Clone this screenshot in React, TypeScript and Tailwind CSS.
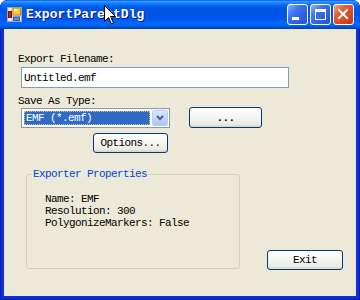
import type { ReactNode } from "react";

const mono = "font-['Liberation_Mono',monospace] text-[11px] leading-[12px] tracking-[-0.6px]";

const XpButton = ({ className, children }: { className: string; children: ReactNode }) => (
  <div
    className={`flex items-center justify-center rounded-[3px] border border-[#003c74] bg-[linear-gradient(180deg,#ffffff_0%,#f4f4f0_50%,#ecebe6_85%,#d6d0c5_100%)] text-black ${mono} ${className}`}
  >
    {children}
  </div>
);

const TitleIcon = () => (
  <svg width="15" height="15" viewBox="0 0 15 15">
    <rect x="0.5" y="0.5" width="14" height="14" fill="#f0f0f0" stroke="#9aa8c0" />
    <line x1="5" y1="0.5" x2="5" y2="14.5" stroke="#b8c4d8" />
    <line x1="0.5" y1="9" x2="14.5" y2="9" stroke="#b8c4d8" />
    <rect x="1.5" y="4.5" width="3" height="6" fill="#d81818" stroke="#8a0a0a" />
    <rect x="6" y="1" width="7.5" height="7" fill="#f8d040" stroke="#c08a10" />
    <rect x="7" y="2" width="3" height="2" fill="#fff4b0" />
    <rect x="6.5" y="10" width="6" height="3.5" fill="#5c8ce0" stroke="#2c5cb0" />
  </svg>
);

const Cursor = () => (
  <svg width="13" height="21" viewBox="0 0 13 21" className="absolute left-[103px] top-[4px]">
    <path
      d="M1.5 1.5 L1.5 17.5 L5.5 13.5 L8.5 20 L10.5 19 L7.5 12.5 L12.5 12.5 Z"
      fill="#ffffff"
      stroke="#000000"
      strokeWidth="1"
      strokeLinejoin="miter"
    />
  </svg>
);

const CaptionButton = ({ kind }: { kind: "min" | "max" | "close" }) => {
  const bg =
    kind === "close"
      ? "bg-[linear-gradient(135deg,#f2a58c_0%,#e35b32_35%,#d44a22_70%,#c03a18_100%)]"
      : "bg-[linear-gradient(135deg,#8fb2f8_0%,#3e74ee_35%,#2d5fe0_70%,#2452d0_100%)]";
  return (
    <div className={`h-[21px] w-[21px] rounded-[3px] border border-white ${bg}`}>
      <svg width="19" height="19" viewBox="0 0 19 19">
        {kind === "min" && <rect x="4" y="12" width="7" height="3" fill="#fff" />}
        {kind === "max" && (
          <g fill="#fff">
            <rect x="4" y="4" width="11" height="3" />
            <rect x="4" y="4" width="1" height="11" />
            <rect x="14" y="4" width="1" height="11" />
            <rect x="4" y="14" width="11" height="1" />
          </g>
        )}
        {kind === "close" && (
          <g stroke="#fff" strokeWidth="2" strokeLinecap="square">
            <line x1="5" y1="5" x2="13" y2="13" />
            <line x1="13" y1="5" x2="5" y2="13" />
          </g>
        )}
      </svg>
    </div>
  );
};

export default function App() {
  return (
    <div className="flex h-[300px] w-[360px] flex-col overflow-hidden rounded-t-[8px] bg-[#0831d9] shadow-[inset_1px_0_#001ea0,inset_-1px_0_#001ea0,inset_0_-1px_#001ea0]">
      {/* title bar */}
      <div className="relative flex h-[29px] shrink-0 items-center rounded-t-[8px] bg-[linear-gradient(180deg,#0058ee_0%,#3a93ff_5%,#288eff_8%,#127dff_12%,#036ffc_16%,#0262ee_22%,#0057e5_30%,#0054e3_40%,#0055eb_60%,#005bf5_70%,#026afe_80%,#0062ef_88%,#0052d6_94%,#0040ab_100%)] pl-[7px] pr-[6px]">
        <TitleIcon />
        <span className="ml-[4px] font-['Liberation_Mono',monospace] text-[13px] font-bold leading-[14px] tracking-[0.1px] text-white [text-shadow:1px_1px_#0a1883]">
          ExportParentDlg
        </span>
        <div className="ml-auto flex gap-[2px]">
          <CaptionButton kind="min" />
          <CaptionButton kind="max" />
          <CaptionButton kind="close" />
        </div>
        <Cursor />
      </div>

      {/* client area */}
      <div className="mx-[4px] mb-[4px] flex flex-1 flex-col bg-[#ece9d8]">
        <div className={`ml-[14px] mt-[24px] text-black ${mono}`}>Export Filename:</div>
        <div className={`ml-[17px] mt-[2px] flex h-[21px] w-[268px] items-center border border-[#7f9db9] bg-white pl-[2px] text-black ${mono}`}>
          Untitled.emf
        </div>
        <div className={`ml-[14px] mt-[7px] text-black ${mono}`}>Save As Type:</div>
        <div className="flex items-start">
          <div className="ml-[17px] mt-[1px] flex h-[20px] w-[149px] items-center border border-[#7f9db9] bg-white pl-[2px] pr-[1px]">
            <div className={`flex h-[14px] w-[126px] items-center border border-dotted border-[#e8c060] bg-[#316ac5] pl-[1px] text-white ${mono}`}>
              EMF (*.emf)
            </div>
            <div className="ml-auto flex h-[16px] w-[16px] items-center justify-center rounded-[2px] border border-[#b9cdf7] bg-[linear-gradient(180deg,#dbe6fd_0%,#c3d4fb_50%,#b0c6f6_100%)]">
              <svg width="8" height="6" viewBox="0 0 8 6">
                <path d="M1 1 L4 4 L7 1" fill="none" stroke="#4d6185" strokeWidth="2" />
              </svg>
            </div>
          </div>
          <XpButton className="ml-[19px] h-[21px] w-[73px] font-bold">...</XpButton>
        </div>
        <XpButton className="ml-[89px] mt-[5px] h-[20px] w-[75px]">Options...</XpButton>

        <div className="flex items-start">
          <div className="relative ml-[22px] mt-[21px] h-[95px] w-[214px] rounded-[3px] border border-[#d0d0bf] pl-[18px] pt-[18px]">
            <span className={`absolute left-[5px] top-[-7px] bg-[#ece9d8] px-[1px] text-[#0046d5] ${mono}`}>
              Exporter Properties
            </span>
            <div className={`text-black ${mono}`}>Name: EMF</div>
            <div className={`text-black ${mono}`}>Resolution: 300</div>
            <div className={`whitespace-nowrap text-black ${mono}`}>PolygonizeMarkers: False</div>
          </div>
          <XpButton className="ml-[27px] mt-[97px] h-[20px] w-[76px]">Exit</XpButton>
        </div>
      </div>
    </div>
  );
}
